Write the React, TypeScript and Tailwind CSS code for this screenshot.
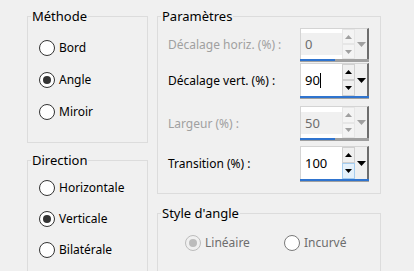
import React from "react";

const font = { fontFamily: '"Noto Sans", "Open Sans", sans-serif' };

function Radio({ label, checked, disabled, muted }: { label: string; checked?: boolean; disabled?: boolean; muted?: boolean }) {
  return (
    <div className="flex items-center">
      <div
        className={
          "w-4 h-4 rounded-full border flex items-center justify-center " +
          (disabled ? "border-[#bcbcbc] bg-[#f0f0f0]" : muted ? "border-[#7a7a7a] bg-white" : "border-[#333333] bg-white")
        }
      >
        {checked && <div className={"w-2 h-2 rounded-full " + (disabled ? "bg-[#bcbcbc]" : "bg-[#333333]")} />}
      </div>
      <span className={"ml-[4px] leading-[16px] " + (disabled || muted ? "text-[#6d6d6d]" : "text-black")}>{label}</span>
    </div>
  );
}

function Tri({ dir, w, h, color }: { dir: "up" | "down"; w: number; h: number; color: string }) {
  return (
    <svg width={w} height={h} viewBox={`0 0 ${w} ${h}`}>
      {dir === "up" ? (
        <polygon points={`0,${h} ${w},${h} ${w / 2},0`} fill={color} />
      ) : (
        <polygon points={`0,0 ${w},0 ${w / 2},${h}`} fill={color} />
      )}
    </svg>
  );
}

function Spin({ value, disabled, cursor, hoverDown, h }: { value: string; disabled?: boolean; cursor?: boolean; hoverDown?: boolean; h: number }) {
  const tri = disabled ? "#a0a0a0" : "#000000";
  return (
    <div className="flex flex-col w-[69px]" style={{ height: h }}>
      <div className="flex flex-1 min-h-0">
        <div className="flex-1 bg-white border-l border-t border-[#d4d4d4] flex items-center">
          <div className={"flex items-center h-[22px] w-full pl-[4px] " + (disabled ? "bg-[#f0f0f0] text-[#6d6d6d]" : "text-black")}>
            <span className="leading-[16px] text-[13px]">{value}</span>
            {cursor && <span className="w-px h-[15px] bg-black" />}
          </div>
        </div>
        <div className="w-[13px] flex flex-col border-t border-[#d4d4d4] bg-white">
          <div className={"flex-1 flex items-center justify-center border " + (disabled ? "border-[#e6e6e6] bg-[#f4f4f4]" : "border-[#d0d0d0] bg-[#f0f0f0]")}>
            <Tri dir="up" w={7} h={4} color={tri} />
          </div>
          <div className={"flex-1 flex items-center justify-center border " + (hoverDown ? "border-[#a6cdef] bg-[#e5f1fb]" : disabled ? "border-[#e6e6e6] bg-[#f4f4f4]" : "border-[#d0d0d0] bg-[#f0f0f0]")}>
            <Tri dir="down" w={7} h={4} color={tri} />
          </div>
        </div>
        <div className="w-[14px] flex items-center justify-center border-t border-[#d4d4d4] border-r-2 border-r-[#6d6d6d] bg-[#f0f0f0]">
          <Tri dir="down" w={9} h={5} color={disabled ? "#a0a0a0" : "#000000"} />
        </div>
      </div>
      <div className="h-[3px] flex bg-[#a0a0a0]">
        <div className={"h-[2px] bg-[#2f74cf] " + (disabled ? "w-[35px]" : "w-full")} />
      </div>
    </div>
  );
}

function Row({ label, disabled, children, mt }: { label: string; disabled?: boolean; children: React.ReactNode; mt: string }) {
  return (
    <div className={"flex items-center " + mt}>
      <div className={"w-[132px] leading-[16px] " + (disabled ? "text-[#a0a0a0]" : "text-black")}>{label}</div>
      {children}
    </div>
  );
}

export default function App() {
  return (
    <div className="w-[414px] h-[271px] bg-[#f0f0f0] overflow-hidden flex text-[12px]" style={font}>
      <div className="flex flex-col pl-[27px] pt-[8px] gap-[9px] w-[148px] shrink-0">
        <fieldset className="border border-[#dcdcdc] w-[121px] h-[135px] min-w-0 shrink-0">
          <legend className="ml-[3px] px-[1px] leading-[16px] text-[13px] text-black">Méthode</legend>
          <div className="flex flex-col pl-[11px] pt-[8px]">
            <div className="h-[32px] flex items-center"><Radio label="Bord" /></div>
            <div className="h-[32px] flex items-center"><Radio label="Angle" checked /></div>
            <div className="h-[32px] flex items-center"><Radio label="Miroir" /></div>
          </div>
        </fieldset>
        <fieldset className="border border-[#dcdcdc] w-[121px] h-[140px] min-w-0 shrink-0">
          <legend className="ml-[3px] px-[1px] leading-[16px] text-[13px] text-black">Direction</legend>
          <div className="flex flex-col pl-[11px] pt-[4px]">
            <div className="h-[31px] flex items-center"><Radio label="Horizontale" /></div>
            <div className="h-[31px] flex items-center"><Radio label="Verticale" checked /></div>
            <div className="h-[31px] flex items-center"><Radio label="Bilatérale" /></div>
          </div>
        </fieldset>
      </div>
      <div className="flex flex-col pl-[9px] pt-[8px] gap-[11px]">
        <fieldset className="border border-[#dcdcdc] w-[224px] h-[186px] min-w-0 shrink-0">
          <legend className="ml-[3px] px-[1px] leading-[16px] text-[13px] text-black">Paramètres</legend>
          <div className="flex flex-col pl-[10px]">
            <Row label="Décalage horiz. (%) :" disabled mt="mt-[4px]">
              <Spin value="0" disabled h={34} />
            </Row>
            <Row label="Décalage vert. (%) :" mt="mt-[1px]">
              <Spin value="90" cursor h={36} />
            </Row>
            <Row label="Largeur (%) :" disabled mt="mt-[7px]">
              <Spin value="50" disabled h={35} />
            </Row>
            <Row label="Transition (%) :" mt="mt-[5px]">
              <Spin value="100" hoverDown h={36} />
            </Row>
          </div>
        </fieldset>
        <fieldset className="border border-[#dcdcdc] w-[224px] h-[120px] min-w-0 shrink-0">
          <legend className="ml-[3px] px-[1px] leading-[16px] text-[13px] text-black">Style d'angle</legend>
          <div className="flex pl-[27px] pt-[6px]">
            <div className="h-[32px] w-[99px] flex items-center"><Radio label="Linéaire" checked disabled /></div>
            <div className="h-[32px] flex items-center"><Radio label="Incurvé" muted /></div>
          </div>
        </fieldset>
      </div>
    </div>
  );
}
